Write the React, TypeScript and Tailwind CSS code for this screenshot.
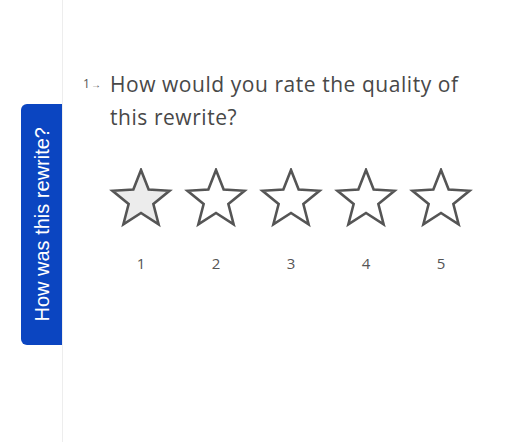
import React from 'react'

const ratings = [1, 2, 3, 4, 5]

function Star({ filled }: { filled: boolean }) {
    return (
        <svg width="64" height="60" viewBox="0 0 64 60" className="block">
            <polygon
                points="32,2 39.64,21.48 60.53,22.73 44.36,36.02 49.63,56.27 32,45 14.37,56.27 19.64,36.02 3.47,22.73 24.36,21.48"
                fill={filled ? '#ececec' : '#ffffff'}
                stroke="#555555"
                strokeWidth="2.6"
                strokeLinejoin="miter"
            />
        </svg>
    )
}

export default function App() {
    return (
        <div className="w-[531px] h-[442px] flex bg-white overflow-hidden">
            <aside className="w-[62px] shrink-0 pt-[104px] flex justify-end">
                <div className="w-[41px] h-[241px] bg-[#0b45c1] rounded-l-[6px] flex items-center justify-center">
                    <span className="[writing-mode:vertical-rl] rotate-180 text-white text-[20px] leading-none whitespace-nowrap font-['Liberation_Sans',Arial,sans-serif]">
                        How was this rewrite?
                    </span>
                </div>
            </aside>

            <main className="flex-1 border-l border-[#ededed] pl-[20px] pt-[68px] font-['Open_Sans',sans-serif]">
                <div className="flex items-start">
                    <span className="w-[27px] pt-[10px] text-[12px] leading-none text-[#555] flex items-center">
                        1<span className="text-[10px] ml-[1px]">→</span>
                    </span>
                    <h1 className="text-[21px] leading-[33px] text-[#484848] tracking-[0.55px]">
                        How would you rate the quality of
                        <br />
                        this rewrite?
                    </h1>
                </div>

                <div className="ml-[26px] mt-[34px] flex gap-[11px]">
                    {ratings.map((n) => (
                        <div key={n} className="flex flex-col items-center">
                            <Star filled={n === 1} />
                            <span className="mt-[25px] text-[15px] leading-[20px] text-[#555]">{n}</span>
                        </div>
                    ))}
                </div>
            </main>
        </div>
    )
}
